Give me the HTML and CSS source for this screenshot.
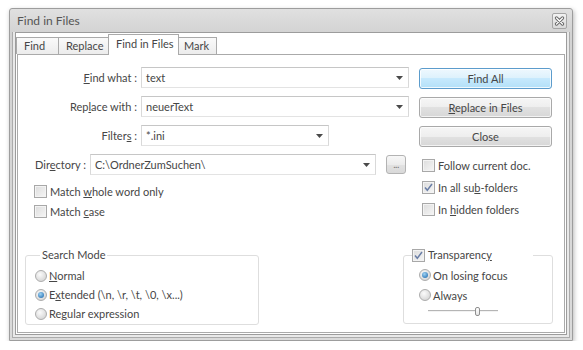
FILE: index.html
```html
<!DOCTYPE html>
<html>
<head>
<meta charset="utf-8">
<title>Find in Files</title>
<link rel="stylesheet" href="styles.css">
</head>
<body>
<div class="window">
  <div class="titlebar">
    <span class="title">Find in Files</span>
    <div class="close">
      <svg width="11" height="10" viewBox="0 0 11 10">
        <path d="M2.5 2 L8.5 8 M8.5 2 L2.5 8" stroke="#6a6a6a" stroke-width="3.2" stroke-linecap="round" fill="none"/>
        <path d="M2.5 2 L8.5 8 M8.5 2 L2.5 8" stroke="#ffffff" stroke-width="1.3" stroke-linecap="round" fill="none"/>
      </svg>
    </div>
  </div>
  <div class="frame">
    <div class="client">
      <div class="tabs">
        <div class="tab t-find">Find</div>
        <div class="tab t-replace">Replace</div>
        <div class="tab t-files active">Find in Files</div>
        <div class="tab t-mark">Mark</div>
      </div>
      <div class="panel">
        <div class="top">
          <div class="form">
            <div class="row">
              <span class="lbl"><u>F</u>ind what :</span>
              <div class="combo w-main"><span class="val">text</span><svg class="arrow" width="7" height="4" viewBox="0 0 7 4"><path d="M0 0 H7 L3.5 4 Z" fill="#4a4a4a"/></svg></div>
            </div>
            <div class="row">
              <span class="lbl">Rep<u>l</u>ace with :</span>
              <div class="combo w-main"><span class="val">neuerText</span><svg class="arrow" width="7" height="4" viewBox="0 0 7 4"><path d="M0 0 H7 L3.5 4 Z" fill="#4a4a4a"/></svg></div>
            </div>
            <div class="row">
              <span class="lbl">Filter<u>s</u> :</span>
              <div class="combo w-filter"><span class="val">*.ini</span><svg class="arrow" width="7" height="4" viewBox="0 0 7 4"><path d="M0 0 H7 L3.5 4 Z" fill="#4a4a4a"/></svg></div>
            </div>
            <div class="row dir">
              <span class="lbl-dir">Dir<u>e</u>ctory :</span>
              <div class="combo w-dir"><span class="val">C:\OrdnerZumSuchen\</span><svg class="arrow" width="7" height="4" viewBox="0 0 7 4"><path d="M0 0 H7 L3.5 4 Z" fill="#4a4a4a"/></svg></div>
              <div class="browse">...</div>
            </div>
            <div class="check first"><span class="box"></span><span>Match <u>w</u>hole word only</span></div>
            <div class="check"><span class="box"></span><span>Match <u>c</u>ase</span></div>
          </div>
          <div class="side">
            <div class="btn default">Find All</div>
            <div class="btn"><u>R</u>eplace in Files</div>
            <div class="btn">Close</div>
            <div class="side-checks">
              <div class="scheck"><span class="box"></span><span>Follow current doc.</span></div>
              <div class="scheck"><span class="box checked"><svg width="11" height="11" viewBox="0 0 11 11"><path d="M2 5.5 L4.3 8.3 L9 2" stroke="#6a7ea6" stroke-width="1.5" fill="none"/></svg></span><span>In all su<u>b</u>-folders</span></div>
              <div class="scheck last"><span class="box"></span><span>In <u>h</u>idden folders</span></div>
            </div>
          </div>
        </div>
        <div class="bottom">
          <fieldset class="group search">
            <legend>Search Mode</legend>
            <div class="radio-row"><span class="radio"></span><span><u>N</u>ormal</span></div>
            <div class="radio-row"><span class="radio on"></span><span>E<u>x</u>tended (\n, \r, \t, \0, \x...)</span></div>
            <div class="radio-row"><span class="radio"></span><span>Re<u>g</u>ular expression</span></div>
          </fieldset>
          <fieldset class="group transp">
            <legend><span class="box checked"><svg width="11" height="11" viewBox="0 0 11 11"><path d="M2 5.5 L4.3 8.3 L9 2" stroke="#6a7ea6" stroke-width="1.5" fill="none"/></svg></span><span>Transparenc<u>y</u></span></legend>
            <div class="radio-row"><span class="radio on"></span><span>On losing focus</span></div>
            <div class="radio-row"><span class="radio"></span><span>Always</span></div>
            <div class="slider"><span class="track"></span><span class="thumb"></span></div>
          </fieldset>
        </div>
      </div>
    </div>
  </div>
</div>
</body>
</html>
```

FILE: styles.css
```css
* { box-sizing: border-box; }

body {
  margin: 0;
  background: #ffffff;
  font-family: Lato, "Open Sans", sans-serif;
  font-size: 11px;
  color: #464646;
}

u { text-decoration: underline; text-underline-offset: 1px; }

.window {
  margin: 8px 0 0 9px;
  width: 564px;
  height: 333px;
  border: 1px solid #9d9d9d;
  border-radius: 3px 3px 0 0;
  background: linear-gradient(#e0e0e0, #d3d3d3 24px, #dadada);
  box-shadow: 1px 2px 5px rgba(0, 0, 0, 0.28);
  display: flex;
  flex-direction: column;
}

.titlebar {
  height: 23px;
  flex: none;
  display: flex;
  align-items: center;
  padding: 0 5px 0 7px;
}

.title {
  flex: 1;
  font-size: 12px;
  color: #555555;
}

.close {
  width: 15px;
  height: 16px;
  border: 1px solid #a5a5a5;
  border-radius: 2px;
  background: linear-gradient(#f2f2f2, #d9d9d9);
  display: flex;
  align-items: center;
  justify-content: center;
}

.frame {
  flex: 1;
  margin: 0 2px 2px;
  border: 1px solid #ababab;
  border-top: 0;
  padding: 0 2px 2px;
  background: #e9e9e9;
  display: flex;
  flex-direction: column;
}

.client {
  flex: 1;
  border: 1px solid #9c9c9c;
  background: #ffffff;
  display: flex;
  flex-direction: column;
}

.tabs {
  height: 21px;
  flex: none;
  display: flex;
  align-items: flex-start;
  position: relative;
  z-index: 1;
}

.tab {
  height: 17px;
  margin-top: 4px;
  margin-right: -1px;
  border: 1px solid #aaaaaa;
  border-bottom: 0;
  background: linear-gradient(#fafafa, #ececec);
  padding-left: 7px;
  line-height: 16px;
  white-space: nowrap;
}

.t-find { width: 43px; }
.t-replace { width: 51px; }
.t-files { width: 71px; }
.t-mark { width: 39px; padding-left: 5px; }

.tab.active {
  height: 21px;
  margin-top: 1px;
  background: #ffffff;
  line-height: 18px;
}

.panel {
  flex: 1;
  margin: 0 1px 1px;
  border: 1px solid #aaaaaa;
  display: flex;
  flex-direction: column;
  padding-bottom: 7px;
}

.top {
  display: flex;
  align-items: flex-start;
}

.form {
  width: 391px;
  padding-top: 12px;
  display: flex;
  flex-direction: column;
}

.row {
  display: flex;
  align-items: center;
  height: 21px;
  margin-bottom: 8px;
}

.lbl {
  width: 119px;
  margin-right: 4px;
  text-align: right;
  white-space: nowrap;
}

.combo {
  height: 21px;
  border: 1px solid;
  border-color: #c6c6c6 #d9d9d9 #e3e3e3 #d9d9d9;
  display: flex;
  align-items: center;
  padding: 0 5px 0 4px;
  background: #fff;
}

.val { flex: 1; white-space: nowrap; }
.arrow { flex: none; }

.w-main { width: 268px; }
.w-filter { width: 188px; }
.w-dir { width: 286px; }

.row.dir {
  padding-left: 17px;
  margin-bottom: 0;
}

.lbl-dir {
  width: 55px;
  white-space: nowrap;
}

.browse {
  width: 20px;
  height: 19px;
  margin-left: 10px;
  border: 1px solid #b3b3b3;
  border-radius: 3px;
  background: linear-gradient(#f7f7f7, #ececec 50%, #e2e2e2 50%, #d9d9d9);
  text-align: center;
  font-size: 10px;
  line-height: 17px;
  color: #777;
  letter-spacing: -0.5px;
}

.check {
  display: flex;
  align-items: center;
  height: 20px;
  padding-left: 16px;
}

.check.first { margin-top: 6px; }

.box {
  width: 13px;
  height: 13px;
  flex: none;
  margin-right: 3px;
  border: 1px solid #a8a8a8;
  background: linear-gradient(135deg, #dcdcdc, #f6f6f6);
  box-shadow: inset 0 0 0 1px #f3f3f3;
  display: flex;
  align-items: center;
  justify-content: center;
}

.side {
  width: 133px;
  margin-left: 10px;
  padding-top: 13px;
  display: flex;
  flex-direction: column;
}

.btn {
  height: 21px;
  margin-bottom: 8px;
  border: 1px solid #a9a9a9;
  border-radius: 3px;
  background: linear-gradient(#f6f6f6, #eeeeee 50%, #e1e1e1 50%, #d7d7d7);
  box-shadow: inset 0 0 0 1px rgba(255, 255, 255, 0.7);
  text-align: center;
  line-height: 19px;
  white-space: nowrap;
}

.btn.default {
  border-color: #5c9ccc;
  background: linear-gradient(#eef8fe, #dcf1fc 50%, #c6e9fd 50%, #b3e0f8);
  box-shadow: inset 0 0 0 1px rgba(255, 255, 255, 0.8);
}

.side-checks {
  margin-top: -1px;
  padding-left: 3px;
  display: flex;
  flex-direction: column;
}

.scheck {
  display: flex;
  align-items: center;
  height: 22px;
}

.scheck.last { height: 23px; }

.bottom {
  margin-top: auto;
  display: flex;
  align-items: flex-start;
}

.group {
  margin: 0;
  padding: 0;
  border: 1px solid #dedede;
  border-radius: 3px;
  min-width: 0;
}

.group legend {
  padding: 0 2px;
  line-height: 14px;
  height: 14px;
  display: flex;
  align-items: center;
}

.search {
  width: 234px;
  height: 77px;
  margin-left: 7px;
  padding: 4px 0 1px 9px;
}

.search legend { margin-left: 5px; }

.transp {
  width: 150px;
  height: 76px;
  margin-left: 144px;
  padding: 3px 0 4px 15px;
}

.transp legend {
  margin-left: -7px;
  width: 121px;
  padding: 0;
}

.radio-row {
  display: flex;
  align-items: center;
  height: 19px;
}

.transp .radio-row { height: 20px; }

.radio {
  width: 12px;
  height: 12px;
  flex: none;
  margin-right: 2px;
  border-radius: 50%;
  border: 1px solid #acacac;
  background: radial-gradient(circle at 40% 35%, #fbfbfb, #d8d8d8 75%);
  display: flex;
  align-items: center;
  justify-content: center;
}

.radio.on::after {
  content: "";
  width: 6px;
  height: 6px;
  border-radius: 50%;
  background: radial-gradient(circle at 40% 35%, #9fd3f3, #3d83bf 70%, #2b6aa3);
}

.slider {
  height: 14px;
  margin-left: 9px;
  padding-top: 2px;
  width: 70px;
  display: flex;
  align-items: flex-start;
}

.track {
  width: 70px;
  height: 2px;
  margin-top: 3px;
  border-top: 1px solid #b5b5b5;
  border-bottom: 1px solid #f2f2f2;
  flex: none;
}

.thumb {
  width: 5px;
  height: 9px;
  margin-left: -23px;
  border: 1px solid #8f8f8f;
  border-radius: 2px;
  background: linear-gradient(#ffffff, #e6e6e6);
  flex: none;
}
```
